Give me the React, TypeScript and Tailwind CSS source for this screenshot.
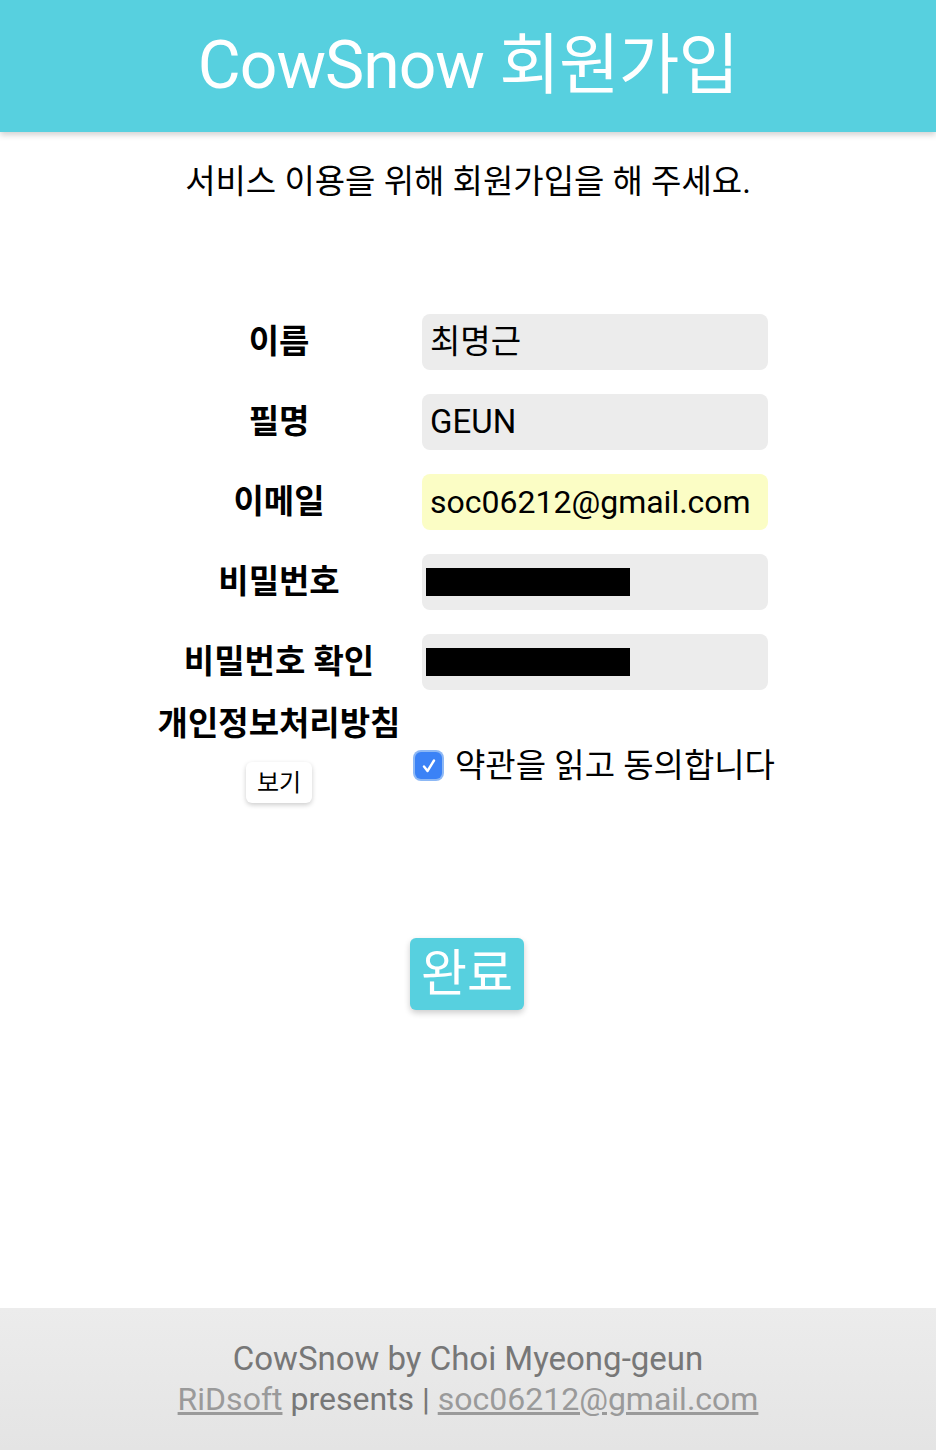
import React from "react";

const font = { fontFamily: 'Roboto, "Noto Sans CJK KR", sans-serif' };

function Row({ label, children }: { label: string; children: React.ReactNode }) {
  return (
    <>
      <div className="flex h-[56px] items-center justify-center whitespace-nowrap text-[33px] font-bold text-black">{label}</div>
      <div className="flex h-[56px] items-center rounded-[8px] bg-[#ececec] px-[8px] text-[33px] text-black">{children}</div>
    </>
  );
}

export default function App() {
  return (
    <div className="flex min-h-[1450px] w-[936px] flex-col bg-white" style={font}>
      <header className="relative z-10 flex h-[132px] items-center justify-center bg-[#57d0df] shadow-[0_3px_6px_rgba(0,0,0,0.18)]">
        <h1 className="text-[66px] font-normal leading-none tracking-[-1px] text-white">CowSnow 회원가입</h1>
      </header>
      <p className="mt-[30px] text-center text-[33px] leading-[40px] text-black">서비스 이용을 위해 회원가입을 해 주세요.</p>

      <div className="ml-[157px] mt-[112px] grid w-[611px] grid-cols-[244px_346px] gap-x-[21px] gap-y-[24px]">
        <Row label="이름">최명근</Row>
        <Row label="필명">GEUN</Row>
        <div className="flex h-[56px] items-center justify-center text-[33px] font-bold text-black">이메일</div>
        <div className="flex h-[56px] items-center whitespace-nowrap rounded-[8px] bg-[#fbfdc5] px-[8px] text-[32px] text-black">soc06212@gmail.com</div>
        <Row label="비밀번호">
          <div className="ml-[-4px] h-[28px] w-[204px] bg-black" />
        </Row>
        <Row label="비밀번호 확인">
          <div className="ml-[-4px] h-[28px] w-[204px] bg-black" />
        </Row>
        <div className="flex flex-col items-center">
          <div className="whitespace-nowrap text-[33px] font-bold leading-[20px] text-black">개인정보처리방침</div>
          <button className="mt-[28px] h-[41px] w-[66px] rounded-[6px] bg-white text-[24px] text-black shadow-[0_2px_5px_rgba(0,0,0,0.2)]">보기</button>
        </div>
        <div className="ml-[-7px] flex items-center gap-[13px] pt-[14px]">
          <span className="flex h-[27px] w-[27px] shrink-0 items-center justify-center rounded-[6px] bg-[#3b82f6] ring-[2px] ring-[#8db8f5]">
            <svg width="20" height="20" viewBox="0 0 20 20" fill="none">
              <path d="M5 10.5 L8.5 15 L15 4.5" stroke="white" strokeWidth="2.4" strokeLinecap="round" strokeLinejoin="round" />
            </svg>
          </span>
          <span className="whitespace-nowrap text-[33px] text-black">약관을 읽고 동의합니다</span>
        </div>
      </div>

      <div className="mt-[135px] flex justify-center">
        <button className="ml-[-2px] h-[72px] w-[114px] rounded-[6px] bg-[#57d0df] text-[50px] leading-none text-white shadow-[0_3px_6px_rgba(0,0,0,0.2)]">완료</button>
      </div>

      <div className="flex-1" />
      <footer className="flex h-[142px] flex-col items-center justify-center bg-gradient-to-b from-[#ececec] to-[#e4e4e4] leading-[40px] text-[#777777]">
        <div className="text-[33px]">CowSnow by Choi Myeong-geun</div>
        <div className="text-[32px]">
          <a className="text-[#9a9a9a] underline">RiDsoft</a> presents | <a className="text-[#9a9a9a] underline">soc06212@gmail.com</a>
        </div>
      </footer>
    </div>
  );
}
